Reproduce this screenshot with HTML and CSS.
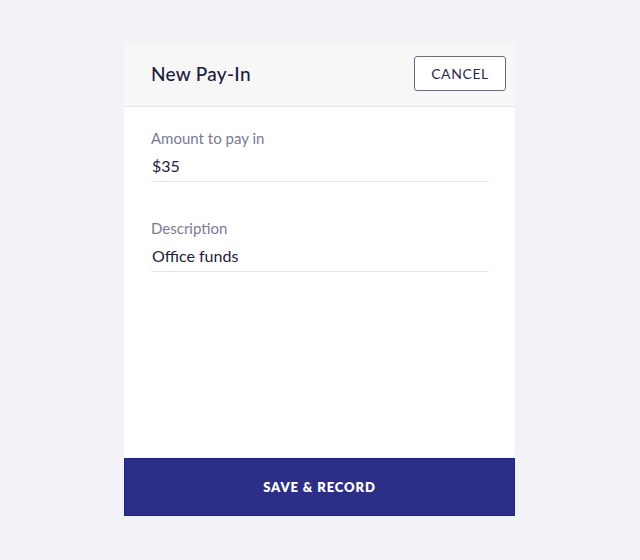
FILE: index.html
```html
<!DOCTYPE html>
<html>
<head>
    <title>New Pay-In</title>
    <link rel="stylesheet" href="styles.css">
</head>
<body>
    <div class="payin-card">
        <header class="payin-header">
            <h1>New Pay-In</h1>
            <button class="cancel-button">CANCEL</button>
        </header>

        <div class="payin-body">
            <div class="field">
                <label class="field-label">Amount to pay in</label>
                <div class="field-value">$35</div>
            </div>
            <div class="field">
                <label class="field-label">Description</label>
                <div class="field-value">Office funds</div>
            </div>
        </div>

        <button class="save-button">SAVE &amp; RECORD</button>
    </div>
</body>
</html>
```

FILE: styles.css
```css
body {
    margin: 0;
    background: #f2f2f7;
    font-family: Lato, "Open Sans", sans-serif;
    color: #1c1c3c;
    display: flex;
    justify-content: center;
    padding-top: 43px;
    min-height: 100vh;
    box-sizing: border-box;
}

.payin-card {
    width: 391px;
    height: 473px;
    background: white;
    display: flex;
    flex-direction: column;
    margin-left: -1px;
}

.payin-header {
    background: #f7f7f8;
    height: 64px;
    box-sizing: border-box;
    border-bottom: 1px solid #e4e4ea;
    display: flex;
    align-items: center;
    justify-content: space-between;
    padding: 0 9px 2px 27px;
}

.payin-header h1 {
    margin: 0;
    font-size: 19px;
    font-weight: 500;
    letter-spacing: 0.3px;
}

.cancel-button {
    width: 92px;
    height: 35px;
    border: 1px solid #6a6a86;
    border-radius: 3px;
    background: white;
    color: #2a2a4a;
    font-family: inherit;
    font-size: 14px;
    letter-spacing: 0.6px;
    cursor: pointer;
}

.payin-body {
    flex: 1;
    padding: 22px 26px 0 27px;
    display: flex;
    flex-direction: column;
    gap: 37px;
}

.field {
    border-bottom: 1px solid #e2e2e8;
    padding-bottom: 6px;
}

.field-label {
    display: block;
    font-size: 15px;
    color: #7a7a95;
    margin-bottom: 9px;
}

.field-value {
    font-size: 16px;
    padding-left: 1px;
}

.save-button {
    height: 58px;
    background: #2d2f87;
    border: 1px solid #1f1f90;
    color: white;
    font-family: inherit;
    font-weight: 800;
    font-size: 13px;
    letter-spacing: 0.9px;
    cursor: pointer;
}
```
